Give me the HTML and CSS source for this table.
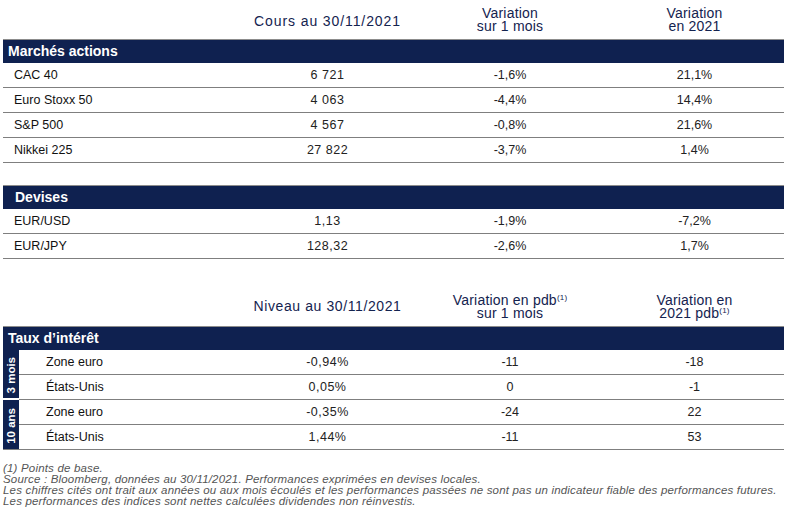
FILE: index.html
```html
<!DOCTYPE html>
<html lang="fr">
<head>
<meta charset="utf-8">
<title>Marchés</title>
<link rel="stylesheet" href="styles.css">
</head>
<body>
<div class="page">
  <div class="head">
    <div></div>
    <div class="h single">Cours au 30/11/2021</div>
    <div class="h">Variation<br>sur 1 mois</div>
    <div class="h">Variation<br>en 2021</div>
  </div>
  <div class="bar">Marchés actions</div>
  <div class="rows">
    <div class="lbl">CAC 40</div><div class="v v1">6 721</div><div class="v">-1,6%</div><div class="v">21,1%</div>
    <div class="lbl">Euro Stoxx 50</div><div class="v v1">4 063</div><div class="v">-4,4%</div><div class="v">14,4%</div>
    <div class="lbl">S&amp;P 500</div><div class="v v1">4 567</div><div class="v">-0,8%</div><div class="v">21,6%</div>
    <div class="lbl">Nikkei 225</div><div class="v v1">27 822</div><div class="v">-3,7%</div><div class="v">1,4%</div>
  </div>

  <div class="bar bar-dev">Devises</div>
  <div class="rows">
    <div class="lbl">EUR/USD</div><div class="v v1">1,13</div><div class="v">-1,9%</div><div class="v">-7,2%</div>
    <div class="lbl">EUR/JPY</div><div class="v v1">128,32</div><div class="v">-2,6%</div><div class="v">1,7%</div>
  </div>

  <div class="head head3">
    <div></div>
    <div class="h">Niveau au 30/11/2021</div>
    <div class="h">Variation en pdb<sup>(1)</sup><br>sur 1 mois</div>
    <div class="h">Variation en<br>2021 pdb<sup>(1)</sup></div>
  </div>
  <div class="bar">Taux d’intérêt</div>
  <div class="rates">
    <div class="side side-top"><span>3 mois</span></div>
    <div class="lbl2">Zone euro</div><div class="v v1">-0,94%</div><div class="v">-11</div><div class="v">-18</div>
    <div class="lbl2">États-Unis</div><div class="v v1">0,05%</div><div class="v">0</div><div class="v">-1</div>
    <div class="side side-bot"><span>10 ans</span></div>
    <div class="lbl2">Zone euro</div><div class="v v1">-0,35%</div><div class="v">-24</div><div class="v">22</div>
    <div class="lbl2">États-Unis</div><div class="v v1">1,44%</div><div class="v">-11</div><div class="v">53</div>
  </div>

  <div class="notes">
    <p>(1) Points de base.</p>
    <p>Source : Bloomberg, données au 30/11/2021. Performances exprimées en devises locales.</p>
    <p>Les chiffres cités ont trait aux années ou aux mois écoulés et les performances passées ne sont pas un indicateur fiable des performances futures.</p>
    <p>Les performances des indices sont nettes calculées dividendes non réinvestis.</p>
  </div>
</div>
</body>
</html>
```

FILE: styles.css
```css
* { box-sizing: border-box; }
html, body { margin: 0; padding: 0; background: #fff; }
body {
  width: 786px;
  font-family: "Liberation Sans", Arial, sans-serif;
  color: #1a1a1a;
}
.page { padding: 0 2px 0 3px; }

.head {
  display: grid;
  grid-template-columns: 237px 175px 190px 1fr;
  height: 39px;
  align-items: center;
}
.head3 { margin-top: 28px; }
.h {
  text-align: center;
  color: #14234f;
  font-size: 14px;
  line-height: 13px;
  letter-spacing: 0.2px;
}
.h.single { padding-top: 4px; letter-spacing: 0.9px; }
.head3 .h:nth-child(2) { letter-spacing: 0.6px; }
.h sup { font-size: 8px; line-height: 0; vertical-align: 5px; }

.bar {
  height: 24px;
  border-top: 1px solid #8c8c8c;
  background: #0f2150;
  color: #fff;
  font-weight: bold;
  font-size: 14px;
  line-height: 23px;
  padding-left: 5px;
}
.bar-dev { margin-top: 22px; padding-left: 12px; }

.rows {
  display: grid;
  grid-template-columns: 237px 175px 190px 1fr;
}
.rows > div, .rates > div:not(.side) {
  height: 25px;
  border-bottom: 1px solid #7f7f7f;
  font-size: 12.5px;
  line-height: 24px;
}
.lbl { padding-left: 11px; color: #111; }
.v { text-align: center; color: #222; }
.v1 { letter-spacing: 0.5px; }

.rates {
  display: grid;
  grid-template-columns: 16px 221px 175px 190px 1fr;
}
.lbl2 { padding-left: 27px; color: #111; }
.side {
  grid-row: span 2;
  background: #0f2150;
  color: #fff;
  font-weight: bold;
  font-size: 11.5px;
  display: flex;
  align-items: center;
  justify-content: center;
}
.side-top { border-bottom: 2px solid #fff; }
.side-bot { border-bottom: 1px solid #7f7f7f; }
.side span {
  writing-mode: vertical-rl;
  transform: rotate(180deg);
  line-height: 16px;
  white-space: nowrap;
  padding-bottom: 3px;
}

.notes {
  margin-top: 13px;
  font-style: italic;
  font-size: 11.5px;
  line-height: 11px;
  letter-spacing: 0.18px;
  color: #555;
  white-space: nowrap;
}
.notes p { margin: 0; }
```
